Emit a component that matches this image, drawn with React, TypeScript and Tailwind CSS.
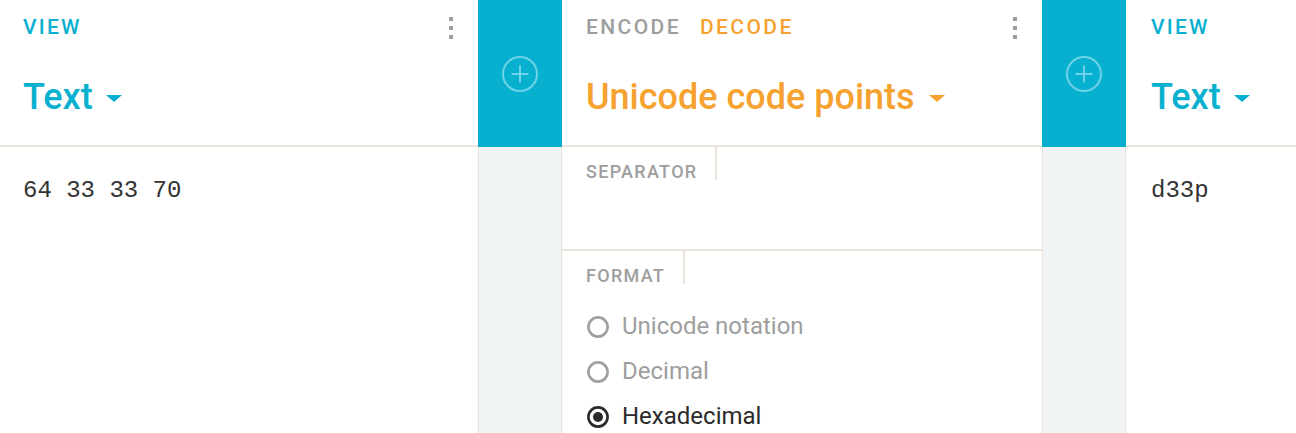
import React from "react";

function Dots() {
	return (
		<div className="flex flex-col gap-[5px] pt-[1px]">
			<span className="block h-[4px] w-[4px] bg-[#9e9e9e]" />
			<span className="block h-[4px] w-[4px] bg-[#9e9e9e]" />
			<span className="block h-[4px] w-[4px] bg-[#9e9e9e]" />
		</div>
	);
}

function Caret({ color }: { color: "cyan" | "orange" }) {
	return (
		<span
			className={
				color === "cyan"
					? "mt-[3px] ml-[13px] block h-0 w-0 border-x-[8px] border-t-[7px] border-x-transparent border-t-[#08b0cf]"
					: "mt-[3px] ml-[14px] block h-0 w-0 border-x-[8px] border-t-[7px] border-x-transparent border-t-[#f5a231]"
			}
		/>
	);
}

function Gutter() {
	return (
		<div className="flex w-[84px] shrink-0 flex-col">
			<div className="flex h-[147px] shrink-0 items-center justify-center bg-[#08b0cf]">
				<svg width="38" height="38" viewBox="0 0 38 38">
					<circle cx="19" cy="19" r="17" fill="none" stroke="#6ed3e8" strokeWidth="2" />
					<path d="M19 10.5v17M10.5 19h17" stroke="#6ed3e8" strokeWidth="2" />
				</svg>
			</div>
			<div className="flex-1 border-x border-[#e9e5dd] bg-[#f1f4f5]" />
		</div>
	);
}

function ViewHeader({ pl, dots }: { pl: string; dots?: boolean }) {
	return (
		<div className={"h-[147px] shrink-0 border-b-2 border-[#e9e5dd] pt-[15px] pr-[25px] " + pl}>
			<div className="flex h-[24px] items-center justify-between">
				<span className="text-[21px] leading-[24px] font-medium tracking-[2.2px] text-[#08b0cf]">
					VIEW
				</span>
				{dots && <Dots />}
			</div>
			<div className="mt-[38px] flex h-[40px] items-center">
				<span className="text-[36px] leading-[40px] font-medium text-[#08b0cf]">Text</span>
				<Caret color="cyan" />
			</div>
		</div>
	);
}

function Radio({ label, checked }: { label: string; checked?: boolean }) {
	return (
		<div className="flex h-[45px] shrink-0 items-center">
			<svg width="22" height="22" viewBox="0 0 22 22" className="shrink-0">
				<circle
					cx="11"
					cy="11"
					r="9.6"
					fill="none"
					stroke={checked ? "#2a2a2a" : "#a0a0a0"}
					strokeWidth="2.6"
				/>
				{checked && <circle cx="11" cy="11" r="5" fill="#2a2a2a" />}
			</svg>
			<span
				className={
					checked
						? "ml-[13px] text-[24px] leading-[45px] text-[#2a2a2a]"
						: "ml-[13px] text-[24px] leading-[45px] text-[#9e9e9e]"
				}
			>
				{label}
			</span>
		</div>
	);
}

function FieldLabel({ children }: { children: React.ReactNode }) {
	return (
		<div className="inline-block h-[33px] border-r-2 border-[#e9e5dd] pt-[16px] pr-[18px] pl-[24px] text-[18px] leading-[18px] font-medium tracking-[1.3px] text-[#9e9e9e]">
			{children}
		</div>
	);
}

export default function App() {
	return (
		<div className="flex h-[433px] w-[1296px] overflow-hidden bg-white font-[family-name:Roboto,sans-serif]">
			{/* left view */}
			<div className="flex w-[478px] shrink-0 flex-col">
				<ViewHeader pl="pl-[23px]" dots />
				<div className="shrink-0 pt-[28px] pl-[23px] font-[family-name:'Liberation_Mono',monospace] text-[24px] leading-[32px] text-[#333]">
					64 33 33 70
				</div>
			</div>

			<Gutter />

			{/* encoder */}
			<div className="flex w-[480px] shrink-0 flex-col">
				<div className="h-[147px] shrink-0 border-b-2 border-[#e9e5dd] pt-[15px] pr-[25px] pl-[24px]">
					<div className="flex h-[24px] items-center justify-between">
						<div className="flex gap-[19px] text-[21px] leading-[24px] font-medium tracking-[2.4px]">
							<span className="text-[#9e9e9e]">ENCODE</span>
							<span className="text-[#f5a231]">DECODE</span>
						</div>
						<Dots />
					</div>
					<div className="mt-[38px] flex h-[40px] items-center">
						<span className="text-[36px] leading-[40px] font-medium text-[#f5a231]">
							Unicode code points
						</span>
						<Caret color="orange" />
					</div>
				</div>

				<div className="h-[104px] shrink-0 border-b-2 border-[#e9e5dd]">
					<FieldLabel>SEPARATOR</FieldLabel>
				</div>

				<div className="shrink-0">
					<FieldLabel>FORMAT</FieldLabel>
					<div className="pt-[15px] pl-[25px]">
						<Radio label="Unicode notation" />
						<Radio label="Decimal" />
						<Radio label="Hexadecimal" checked />
					</div>
				</div>
			</div>

			<Gutter />

			{/* right view */}
			<div className="flex min-w-0 flex-1 flex-col">
				<ViewHeader pl="pl-[25px]" />
				<div className="shrink-0 pt-[28px] pl-[25px] font-[family-name:'Liberation_Mono',monospace] text-[24px] leading-[32px] text-[#333]">
					d33p
				</div>
			</div>
		</div>
	);
}
